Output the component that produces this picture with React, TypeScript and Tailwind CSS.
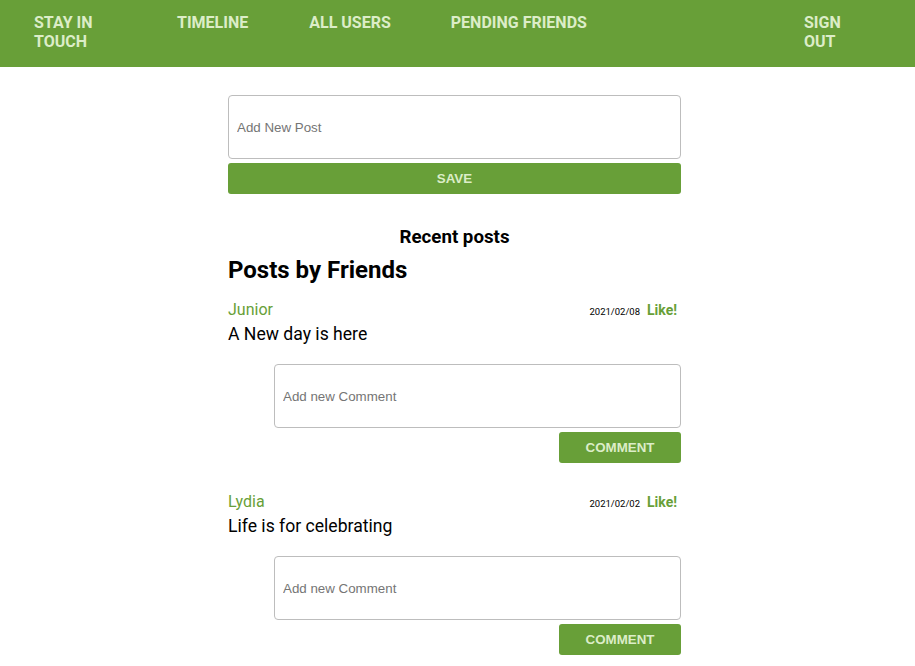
const posts = [
  { author: "Junior", date: "2021/02/08", body: "A New day is here" },
  { author: "Lydia", date: "2021/02/02", body: "Life is for celebrating" },
];

function NavBar() {
  return (
    <nav className="h-[67px] bg-[#689f38] flex items-start pt-[13px] font-['Roboto',sans-serif] text-[16px] font-bold leading-[19px] text-[#dcedc8]">
      <a className="ml-[34px] w-[70px]">STAY IN TOUCH</a>
      <a className="ml-[73px]">TIMELINE</a>
      <a className="ml-[61px]">ALL USERS</a>
      <a className="ml-[60px]">PENDING FRIENDS</a>
      <a className="ml-auto mr-[70px] w-[41px]">SIGN OUT</a>
    </nav>
  );
}

function Post({ author, date, body }: { author: string; date: string; body: string }) {
  return (
    <div className="mb-[29px]">
      <div className="flex items-center justify-between h-[20px]">
        <span className="text-[16px] text-[#689f38]">{author}</span>
        <div className="flex items-baseline gap-[7px] pr-[4px]">
          <span className="text-[9.5px] text-black">{date}</span>
          <span className="text-[14px] font-bold text-[#689f38]">Like!</span>
        </div>
      </div>
      <p className="mt-[1px] text-[17.6px] leading-[26px] text-black">{body}</p>
      <div className="ml-[46px] mt-[17px] flex flex-col items-end">
        <input
          placeholder="Add new Comment"
          className="w-full h-[64px] rounded-[4px] border border-[#bdbdbd] px-[8px] font-['Liberation_Sans',sans-serif] text-[13.33px] placeholder:text-[#757575] outline-none"
        />
        <button className="mt-[4px] w-[122px] h-[31px] rounded-[3px] bg-[#689f38] font-['Liberation_Sans',sans-serif] text-[13.33px] font-bold text-[#dcedc8]">
          COMMENT
        </button>
      </div>
    </div>
  );
}

export default function App() {
  return (
    <div className="min-h-screen bg-white font-['Roboto',sans-serif]">
      <NavBar />
      <main className="w-[453px] ml-[228px] pt-[28px]">
        <input
          placeholder="Add New Post"
          className="w-full h-[64px] rounded-[4px] border border-[#bdbdbd] px-[8px] font-['Liberation_Sans',sans-serif] text-[13.33px] placeholder:text-[#757575] outline-none"
        />
        <button className="mt-[4px] w-full h-[31px] rounded-[3px] bg-[#689f38] font-['Liberation_Sans',sans-serif] text-[13.33px] font-bold text-[#dcedc8]">
          SAVE
        </button>
        <h3 className="mt-[32px] text-center text-[18.72px] font-bold leading-[22px]">Recent posts</h3>
        <h2 className="mt-[8px] text-[24px] font-bold leading-[28px]">Posts by Friends</h2>
        <div className="mt-[16px]">
          {posts.map((p) => (
            <Post key={p.author} {...p} />
          ))}
        </div>
      </main>
    </div>
  );
}
